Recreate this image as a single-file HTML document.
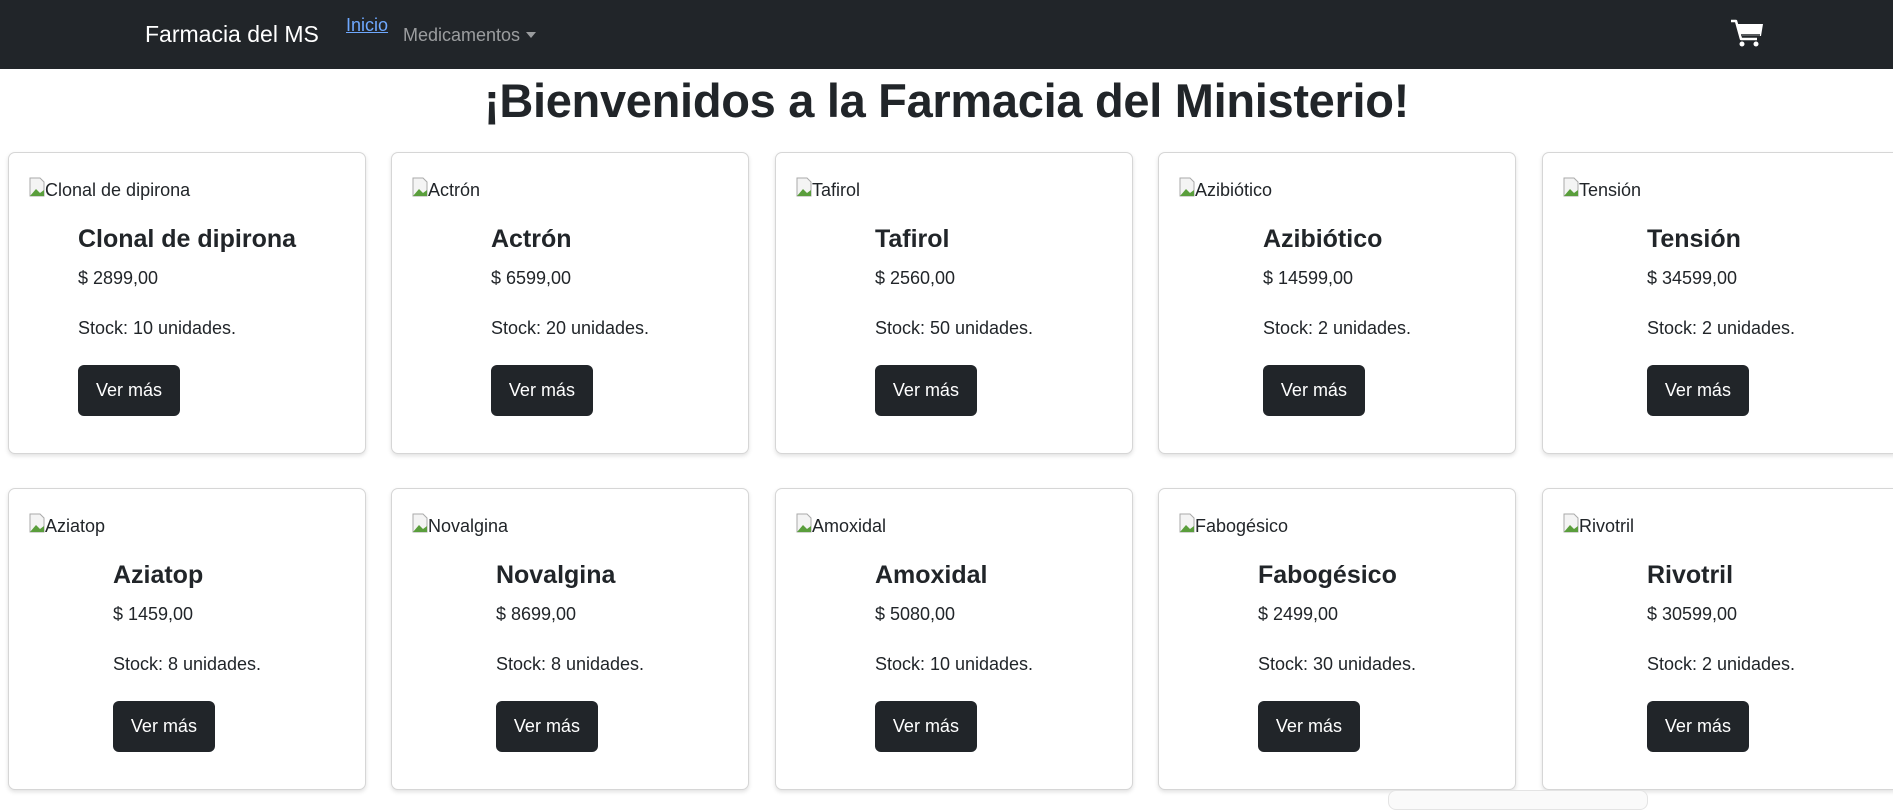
<!DOCTYPE html>
<html><head><meta charset="utf-8"><style>
*{box-sizing:border-box;margin:0;padding:0}
body{width:1893px;height:801px;overflow:hidden;background:#fff;font-family:"Liberation Sans",sans-serif;color:#212529;position:relative}
.nav{position:absolute;left:0;top:0;width:1893px;height:69px;background:#212529}
.brand{position:absolute;left:145px;top:20px;font-size:23px;color:#fff;line-height:28px}
.inicio{position:absolute;left:346px;top:14px;font-size:18px;color:#6ea8fe;text-decoration:underline;line-height:22px}
.med{position:absolute;left:403px;top:24px;font-size:18px;color:rgba(255,255,255,.55);line-height:22px}
.med:after{content:"";display:inline-block;margin-left:6px;vertical-align:3px;border-top:6px solid rgba(255,255,255,.55);border-left:5px solid transparent;border-right:5px solid transparent}
.cart{position:absolute;left:1730px;top:19px}
h1{position:absolute;left:0;width:1893px;top:73px;text-align:center;font-size:47px;font-weight:bold;line-height:56px;letter-spacing:-0.3px}
.card{position:absolute;width:358px;height:302px;border:1px solid #d6d6d6;border-radius:7px;background:#fff;box-shadow:0 2px 4px rgba(0,0,0,.12)}
.alt{position:absolute;left:20px;top:24px;font-size:18px;line-height:22px;white-space:nowrap}
.alt svg{vertical-align:-1px}
.body{position:absolute;left:0;width:100%;top:71px;text-align:center}
.in{display:inline-block;text-align:left}
.t{font-size:25px;line-height:30px;font-weight:bold;white-space:nowrap}
.p{font-size:18px;line-height:23px;margin-top:13px;white-space:nowrap}
.s{font-size:18px;line-height:23px;margin-top:27px;white-space:nowrap}
.b{margin-top:25px;width:102px;height:51px;background:#212529;color:#fff;border-radius:6px;font-size:18px;line-height:51px;text-align:center}
.ghost{position:absolute;left:1388px;top:790px;width:260px;height:20px;border:1px solid #e4e4e4;border-radius:8px;background:#fafafa}
</style></head><body>
<div class="nav">
<div class="brand">Farmacia del MS</div>
<a class="inicio">Inicio</a>
<div class="med">Medicamentos</div>
<svg class="cart" width="34" height="28" viewBox="0 0 34 28"><path d="M1 2h5l5 18h16" stroke="#fff" stroke-width="2.5" fill="none" stroke-linejoin="round"/><path d="M7 5h26l-2 12H10z" fill="#fff"/><path d="M11 16h19" stroke="#212529" stroke-width="1.5"/><circle cx="12" cy="25" r="2.5" fill="#fff"/><circle cx="26" cy="25" r="2.5" fill="#fff"/></svg>
</div>
<h1>¡Bienvenidos a la Farmacia del Ministerio!</h1>

<div class="card" style="left:8px;top:152px"><div class="alt"><svg width="16" height="20" viewBox="0 0 16 20"><path d="M1 1h10l4 4v14H1z" fill="#f4f4f4" stroke="#aaa"/><path d="M1 19l6-7 4 4 4-3v6z" fill="#5a9e3c"/></svg>Clonal de dipirona</div><div class="body"><div class="in"><div class="t">Clonal de dipirona</div><div class="p">$ 2899,00</div><div class="s">Stock: 10 unidades.</div><div class="b">Ver más</div></div></div></div>
<div class="card" style="left:391px;top:152px"><div class="alt"><svg width="16" height="20" viewBox="0 0 16 20"><path d="M1 1h10l4 4v14H1z" fill="#f4f4f4" stroke="#aaa"/><path d="M1 19l6-7 4 4 4-3v6z" fill="#5a9e3c"/></svg>Actrón</div><div class="body"><div class="in"><div class="t">Actrón</div><div class="p">$ 6599,00</div><div class="s">Stock: 20 unidades.</div><div class="b">Ver más</div></div></div></div>
<div class="card" style="left:775px;top:152px"><div class="alt"><svg width="16" height="20" viewBox="0 0 16 20"><path d="M1 1h10l4 4v14H1z" fill="#f4f4f4" stroke="#aaa"/><path d="M1 19l6-7 4 4 4-3v6z" fill="#5a9e3c"/></svg>Tafirol</div><div class="body"><div class="in"><div class="t">Tafirol</div><div class="p">$ 2560,00</div><div class="s">Stock: 50 unidades.</div><div class="b">Ver más</div></div></div></div>
<div class="card" style="left:1158px;top:152px"><div class="alt"><svg width="16" height="20" viewBox="0 0 16 20"><path d="M1 1h10l4 4v14H1z" fill="#f4f4f4" stroke="#aaa"/><path d="M1 19l6-7 4 4 4-3v6z" fill="#5a9e3c"/></svg>Azibiótico</div><div class="body"><div class="in"><div class="t">Azibiótico</div><div class="p">$ 14599,00</div><div class="s">Stock: 2 unidades.</div><div class="b">Ver más</div></div></div></div>
<div class="card" style="left:1542px;top:152px"><div class="alt"><svg width="16" height="20" viewBox="0 0 16 20"><path d="M1 1h10l4 4v14H1z" fill="#f4f4f4" stroke="#aaa"/><path d="M1 19l6-7 4 4 4-3v6z" fill="#5a9e3c"/></svg>Tensión</div><div class="body"><div class="in"><div class="t">Tensión</div><div class="p">$ 34599,00</div><div class="s">Stock: 2 unidades.</div><div class="b">Ver más</div></div></div></div>

<div class="card" style="left:8px;top:488px"><div class="alt"><svg width="16" height="20" viewBox="0 0 16 20"><path d="M1 1h10l4 4v14H1z" fill="#f4f4f4" stroke="#aaa"/><path d="M1 19l6-7 4 4 4-3v6z" fill="#5a9e3c"/></svg>Aziatop</div><div class="body"><div class="in"><div class="t">Aziatop</div><div class="p">$ 1459,00</div><div class="s">Stock: 8 unidades.</div><div class="b">Ver más</div></div></div></div>
<div class="card" style="left:391px;top:488px"><div class="alt"><svg width="16" height="20" viewBox="0 0 16 20"><path d="M1 1h10l4 4v14H1z" fill="#f4f4f4" stroke="#aaa"/><path d="M1 19l6-7 4 4 4-3v6z" fill="#5a9e3c"/></svg>Novalgina</div><div class="body"><div class="in"><div class="t">Novalgina</div><div class="p">$ 8699,00</div><div class="s">Stock: 8 unidades.</div><div class="b">Ver más</div></div></div></div>
<div class="card" style="left:775px;top:488px"><div class="alt"><svg width="16" height="20" viewBox="0 0 16 20"><path d="M1 1h10l4 4v14H1z" fill="#f4f4f4" stroke="#aaa"/><path d="M1 19l6-7 4 4 4-3v6z" fill="#5a9e3c"/></svg>Amoxidal</div><div class="body"><div class="in"><div class="t">Amoxidal</div><div class="p">$ 5080,00</div><div class="s">Stock: 10 unidades.</div><div class="b">Ver más</div></div></div></div>
<div class="card" style="left:1158px;top:488px"><div class="alt"><svg width="16" height="20" viewBox="0 0 16 20"><path d="M1 1h10l4 4v14H1z" fill="#f4f4f4" stroke="#aaa"/><path d="M1 19l6-7 4 4 4-3v6z" fill="#5a9e3c"/></svg>Fabogésico</div><div class="body"><div class="in"><div class="t">Fabogésico</div><div class="p">$ 2499,00</div><div class="s">Stock: 30 unidades.</div><div class="b">Ver más</div></div></div></div>
<div class="card" style="left:1542px;top:488px"><div class="alt"><svg width="16" height="20" viewBox="0 0 16 20"><path d="M1 1h10l4 4v14H1z" fill="#f4f4f4" stroke="#aaa"/><path d="M1 19l6-7 4 4 4-3v6z" fill="#5a9e3c"/></svg>Rivotril</div><div class="body"><div class="in"><div class="t">Rivotril</div><div class="p">$ 30599,00</div><div class="s">Stock: 2 unidades.</div><div class="b">Ver más</div></div></div></div>
<div class="ghost"></div>
</body></html>
